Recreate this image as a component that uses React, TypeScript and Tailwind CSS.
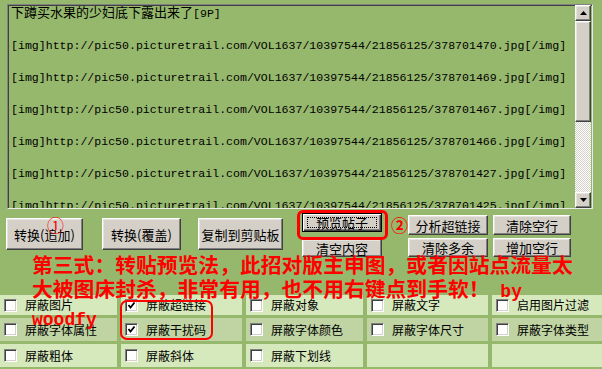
const links = ["470", "469", "467", "466", "427", "425"];

const cells = [
  [
    { label: "屏蔽图片" },
    { label: "屏蔽超链接", checked: true },
    { label: "屏蔽对象" },
    { label: "屏蔽文字" },
    { label: "启用图片过滤" },
  ],
  [
    { label: "屏蔽字体属性" },
    { label: "屏蔽干扰码", checked: true },
    { label: "屏蔽字体颜色" },
    { label: "屏蔽字体尺寸" },
    { label: "屏蔽字体类型" },
  ],
  [{ label: "屏蔽粗体" }, { label: "屏蔽斜体" }, { label: "屏蔽下划线" }, null, null],
];

const classic =
  "bg-[#d4d0c8] border border-t-white border-l-white border-r-[#404040] border-b-[#404040] shadow-[inset_-1px_-1px_0_#808080,inset_1px_1px_0_#e6e4de] flex items-center justify-center text-[13px] text-black leading-none";

function Btn({ label, className }: { label: string; className: string }) {
  return <button className={classic + " " + className}>{label}</button>;
}

function Arrow({ up }: { up?: boolean }) {
  return (
    <div className={classic + " w-[16px] h-[16px]"}>
      <svg width="7" height="4" viewBox="0 0 7 4">
        <polygon points={up ? "3.5,0 7,4 0,4" : "0,0 7,0 3.5,4"} fill="#000" />
      </svg>
    </div>
  );
}

function Check({ checked }: { checked?: boolean }) {
  return (
    <div className="w-[13px] h-[13px] shrink-0 bg-white border border-t-[#808080] border-l-[#808080] border-b-white border-r-white shadow-[inset_1px_1px_0_#404040,inset_-1px_-1px_0_#d4d0c8] flex items-center justify-center">
      {checked && (
        <svg width="9" height="9" viewBox="0 0 9 9">
          <polyline points="1.5,4 3.5,6.5 7.5,1.5" fill="none" stroke="#000" strokeWidth="1.8" />
        </svg>
      )}
    </div>
  );
}

export default function App() {
  return (
    <div className="relative w-[602px] h-[369px] overflow-hidden bg-[#96b86d] font-['Noto_Sans_CJK_SC',sans-serif]">
      {/* text box */}
      <div className="ml-[7px] mt-[4px] w-[586px] h-[205px] flex border border-t-[#808080] border-l-[#808080] border-r-[#e8e8e8] border-b-[#e8e8e8] shadow-[inset_1px_1px_0_#404040]">
        <div className="flex-1 overflow-hidden pl-[3px] pt-[1px] font-['Liberation_Mono','Noto_Sans_CJK_SC',monospace] text-[11.57px] leading-[16px] text-black whitespace-pre">
          <div>
            <span className="text-[13px]">下蹲买水果的少妇底下露出来了</span>[9P]
          </div>
          {links.map((n) => (
            <div key={n}>
              <div>&nbsp;</div>
              <div>[img]http://pic50.picturetrail.com/VOL1637/10397544/21856125/3787014{n.slice(1)}.jpg[/img]</div>
            </div>
          ))}
        </div>
        <div className="w-[16px] mr-[1px] flex flex-col">
          <Arrow up />
          <div className={classic + " h-[101px]"} />
          <div className="flex-1 bg-[repeating-conic-gradient(#d4d0c8_0%_25%,#ffffff_0%_50%)] bg-[length:2px_2px]" />
          <Arrow />
        </div>
      </div>

      {/* buttons */}
      <div className="mt-[4px] flex items-start h-[45px]">
        <Btn label="转换(追加)" className="ml-[6px] mt-[5px] w-[77px] h-[32px]" />
        <Btn label="转换(覆盖)" className="ml-[19px] mt-[5px] w-[79px] h-[32px]" />
        <Btn label="复制到剪贴板" className="ml-[17px] mt-[5px] w-[85px] h-[32px]" />
        <div className="ml-[19px] flex flex-col gap-[7px]">
          <button className="relative w-[80px] h-[19px] bg-[#d4d0c8] border border-black shadow-[inset_1px_1px_0_#fff,inset_-1px_-1px_0_#404040,inset_-2px_-2px_0_#808080] flex items-center justify-center text-[13px] leading-none text-black">
            <span className="absolute inset-x-[4px] inset-y-[3px] border border-dotted border-black" />
            预览帖子
          </button>
          <Btn label="清空内容" className="w-[80px] h-[18px]" />
        </div>
        <div className="ml-[26px] mt-[2px] flex flex-col gap-[3px]">
          <Btn label="分析超链接" className="w-[80px] h-[20px]" />
          <Btn label="清除多余" className="w-[80px] h-[19px]" />
        </div>
        <div className="ml-[5px] mt-[2px] flex flex-col gap-[3px]">
          <Btn label="清除空行" className="w-[78px] h-[20px]" />
          <Btn label="增加空行" className="w-[78px] h-[19px]" />
        </div>
      </div>

      {/* option grid */}
      <div className="mt-[37px] grid grid-cols-[117px_121px_117px_121px_1fr] grid-rows-[20px_23px_23px] gap-x-[4px] gap-y-[3px]">
        {cells.map((row, r) =>
          row.map((c, i) => (
            <div
              key={r + "-" + i}
              className={
                "flex items-center gap-[8px] pl-[4px] text-[12px] text-black " +
                (r === 1 ? "bg-[#bfd4a2]" : "bg-[#d6e9bc]")
              }
            >
              {c && (
                <>
                  <Check checked={c.checked} />
                  <span>{c.label}</span>
                </>
              )}
            </div>
          ))
        )}
      </div>

      {/* red annotations */}
      <span className="absolute left-[47px] top-[215px] text-[17px] leading-[20px] text-[#ff0000]">①</span>
      <span className="absolute left-[391px] top-[215px] text-[17px] leading-[20px] font-bold text-[#ff0000]">②</span>
      <div className="absolute left-[297px] top-[210px] w-[91px] h-[30px] border-[3px] border-[#ff0000] rounded-[6px]" />
      <div className="absolute left-[120px] top-[300px] w-[93px] h-[40px] border-2 border-[#ff0000] rounded-[7px]" />
      <p className="absolute left-[32px] top-[252px] w-[548px] text-[20.8px] leading-[24px] font-bold text-[#ff0000]">
        第三式：转贴预览法，此招对版主申图，或者因站点流量太大被图床封杀，非常有用，也不用右键点到手软！
        <span className="font-['Liberation_Mono',monospace] text-[18px]"> by woodfy</span>
      </p>
    </div>
  );
}
